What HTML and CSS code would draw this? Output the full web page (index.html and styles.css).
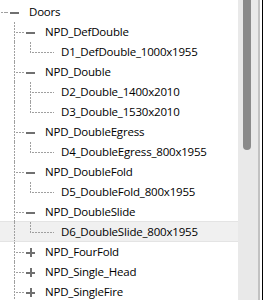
FILE: index.html
```html
<!DOCTYPE html>
<html>
<head>
<meta charset="utf-8">
<link rel="stylesheet" href="styles.css">
</head>
<body>
<div class="panel">
  <div class="tree">
    <div class="row top-gap"></div>
    <div class="row"><span class="cell conn-h"></span><span class="cell exp"><span class="box minus"></span></span><span class="label">Doors</span></div>

    <div class="row"><span class="cell"></span><span class="cell conn tee"></span><span class="cell exp"><span class="box minus"></span></span><span class="label">NPD_DefDouble</span></div>
    <div class="row"><span class="cell"></span><span class="cell guide"></span><span class="cell conn ell"></span><span class="cell leaf"></span><span class="label">D1_DefDouble_1000x1955</span></div>

    <div class="row"><span class="cell"></span><span class="cell conn tee"></span><span class="cell exp"><span class="box minus"></span></span><span class="label">NPD_Double</span></div>
    <div class="row"><span class="cell"></span><span class="cell guide"></span><span class="cell conn tee"></span><span class="cell leaf"></span><span class="label">D2_Double_1400x2010</span></div>
    <div class="row"><span class="cell"></span><span class="cell guide"></span><span class="cell conn ell"></span><span class="cell leaf"></span><span class="label">D3_Double_1530x2010</span></div>

    <div class="row"><span class="cell"></span><span class="cell conn tee"></span><span class="cell exp"><span class="box minus"></span></span><span class="label">NPD_DoubleEgress</span></div>
    <div class="row"><span class="cell"></span><span class="cell guide"></span><span class="cell conn ell"></span><span class="cell leaf"></span><span class="label">D4_DoubleEgress_800x1955</span></div>

    <div class="row"><span class="cell"></span><span class="cell conn tee"></span><span class="cell exp"><span class="box minus"></span></span><span class="label">NPD_DoubleFold</span></div>
    <div class="row"><span class="cell"></span><span class="cell guide"></span><span class="cell conn ell"></span><span class="cell leaf"></span><span class="label">D5_DoubleFold_800x1955</span></div>

    <div class="row"><span class="cell"></span><span class="cell conn tee"></span><span class="cell exp"><span class="box minus"></span></span><span class="label">NPD_DoubleSlide</span></div>
    <div class="row selected"><span class="cell"></span><span class="cell guide"></span><span class="cell conn ell"></span><span class="cell leaf"></span><span class="label">D6_DoubleSlide_800x1955</span></div>

    <div class="row"><span class="cell"></span><span class="cell conn tee"></span><span class="cell exp"><span class="box plus"></span></span><span class="label">NPD_FourFold</span></div>
    <div class="row"><span class="cell"></span><span class="cell conn tee"></span><span class="cell exp"><span class="box plus"></span></span><span class="label">NPD_Single_Head</span></div>
    <div class="row"><span class="cell"></span><span class="cell conn tee"></span><span class="cell exp"><span class="box plus"></span></span><span class="label">NPD_SingleFire</span></div>
  </div>
  <div class="scrollbar">
    <div class="track"><div class="thumb"></div></div>
    <div class="edge"></div>
    <div class="gap"></div>
    <div class="border"></div>
  </div>
</div>
</body>
</html>
```

FILE: styles.css
```css
html, body {
  margin: 0;
  padding: 0;
  background: #ffffff;
}

.panel {
  display: flex;
  width: 263px;
  height: 300px;
  overflow: hidden;
}

.tree {
  width: 238px;
  flex: none;
  overflow: hidden;
  font-family: "Open Sans", "Noto Sans", sans-serif;
  font-size: 11.5px;
  letter-spacing: -0.2px;
  color: #000000;
}

.row {
  display: flex;
  align-items: stretch;
  height: 20px;
  margin-left: -10px;
  box-sizing: border-box;
}

.row.top-gap {
  height: 2px;
}

.row.selected {
  background: #f0f0f0;
  border-top: 1px solid #e4e4e4;
  border-bottom: 1px solid #e4e4e4;
  margin-top: -1px;
  height: 21px;
}

.cell {
  width: 16px;
  flex: none;
  position: relative;
}

/* dotted line pieces */
.conn-h,
.conn,
.guide,
.leaf,
.exp {
  background-repeat: no-repeat;
}

.guide {
  background-image: repeating-linear-gradient(to bottom, #a0a0a0 0 2px, transparent 2px 3px);
  background-size: 1px 100%;
  background-position: 8px 0;
}

.conn-h {
  background-image: repeating-linear-gradient(to right, #a0a0a0 0 2px, transparent 2px 3px);
  background-size: 8px 1px;
  background-position: 8px 10px;
}

.conn.tee {
  background-image:
    repeating-linear-gradient(to bottom, #a0a0a0 0 2px, transparent 2px 3px),
    repeating-linear-gradient(to right, #a0a0a0 0 2px, transparent 2px 3px);
  background-size: 1px 100%, 7px 1px;
  background-position: 8px 0, 10px 10px;
}

.conn.ell {
  background-image:
    repeating-linear-gradient(to bottom, #a0a0a0 0 2px, transparent 2px 3px),
    repeating-linear-gradient(to right, #a0a0a0 0 2px, transparent 2px 3px);
  background-size: 1px 11px, 7px 1px;
  background-position: 8px 0, 10px 10px;
}

.leaf {
  background-image: repeating-linear-gradient(to right, #a0a0a0 0 2px, transparent 2px 3px);
  background-size: 16px 1px;
  background-position: 0 10px;
}

.exp {
  display: flex;
  align-items: center;
  justify-content: center;
  background-image: repeating-linear-gradient(to right, #a0a0a0 0 2px, transparent 2px 3px);
  background-size: 3px 1px;
  background-position: 0 10px;
}

.box {
  width: 9px;
  height: 9px;
  position: relative;
  margin-left: 1px;
}

.box::before,
.box::after {
  content: "";
  position: absolute;
  background: #707070;
}

.box::before {
  left: 0;
  right: 0;
  top: 4px;
  height: 2px;
}

.plus::after {
  top: 0;
  bottom: 0;
  left: 4px;
  width: 2px;
}

.label {
  padding-left: 7px;
  line-height: 20px;
  white-space: nowrap;
}

.selected .label {
  line-height: 19px;
}

.scrollbar {
  display: flex;
  flex: none;
  width: 25px;
  height: 300px;
}

.track {
  width: 20px;
  background: #e9e9e9;
  padding-left: 5px;
  box-sizing: border-box;
}

.thumb {
  width: 8px;
  height: 150px;
  background: #8a8a8a;
  border-radius: 0 0 4px 4px;
}

.edge {
  width: 2px;
  background: #c2c2c2;
}

.gap {
  width: 2px;
  background: #ffffff;
}

.border {
  width: 1px;
  background: #000000;
}
```
